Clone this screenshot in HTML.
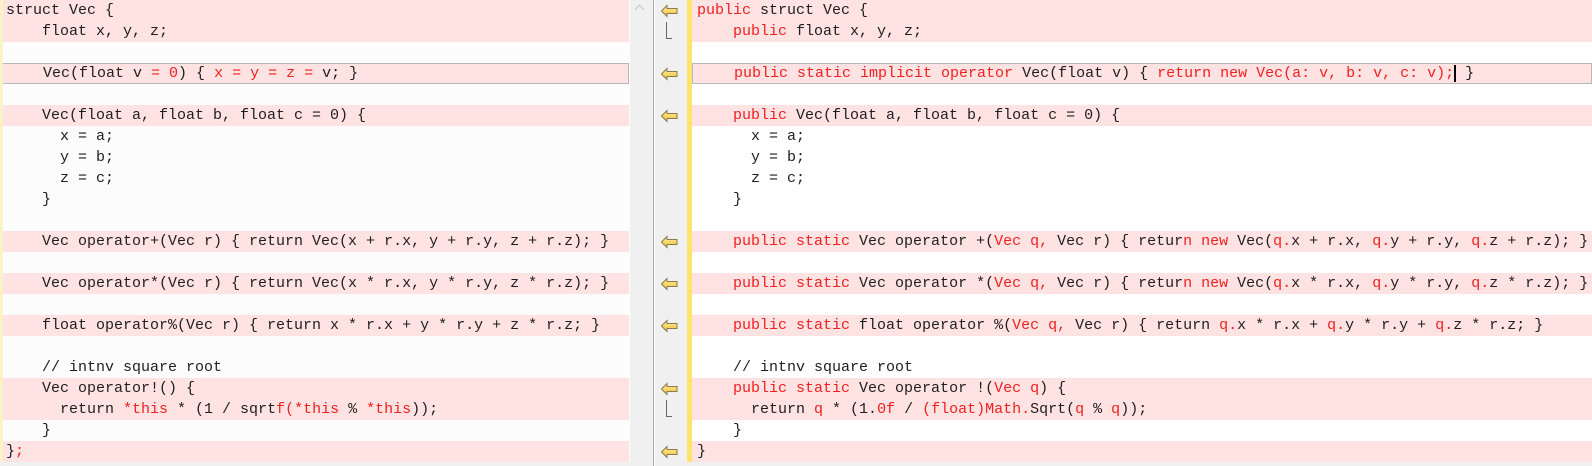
<!DOCTYPE html>
<html><head><meta charset="utf-8"><style>
*{margin:0;padding:0;box-sizing:border-box}
body{width:1592px;height:466px;overflow:hidden;background:#f0f0f0;position:relative;font-family:"Liberation Mono",monospace;font-size:15px;color:#1e1e1e}
.pane{position:absolute;top:0;height:462px;overflow:hidden}
#L{left:0;width:629px;background:#fcfcfc}
#R{left:692px;width:900px;background:#fff}
.ln{position:absolute;left:0;right:0;height:21px;line-height:21px;white-space:pre}
#L .ln{padding-left:6px}
#R .ln{padding-left:5px}
.p{background:#ffe3e3}
.box{border:1px solid #b8b8b8;line-height:19px}
.r{color:#f02020}
.arr{position:absolute;left:661px;width:17px;height:12px}
.brk{position:absolute;left:666px;width:6px;border-left:1px solid #666;border-bottom:1px solid #666}
</style></head><body>
<div style="position:absolute;left:0;top:0;width:3px;height:462px;background:#fbf3c8;z-index:2"></div>
<div class="pane" id="L">
<div class="ln p" style="top:0">struct Vec {</div>
<div class="ln p" style="top:21px">    float x, y, z;</div>
<div class="ln p box" style="top:63px">    Vec(float v <span class="r">= 0</span>) { <span class="r">x = y = z =</span> v; }</div>
<div class="ln p" style="top:105px">    Vec(float a, float b, float c = 0) {</div>
<div class="ln" style="top:126px">      x = a;</div>
<div class="ln" style="top:147px">      y = b;</div>
<div class="ln" style="top:168px">      z = c;</div>
<div class="ln" style="top:189px">    }</div>
<div class="ln p" style="top:231px">    Vec operator+(Vec r) { return Vec(x + r.x, y + r.y, z + r.z); }</div>
<div class="ln p" style="top:273px">    Vec operator*(Vec r) { return Vec(x * r.x, y * r.y, z * r.z); }</div>
<div class="ln p" style="top:315px">    float operator%(Vec r) { return x * r.x + y * r.y + z * r.z; }</div>
<div class="ln" style="top:357px">    // intnv square root</div>
<div class="ln p" style="top:378px">    Vec operator!() {</div>
<div class="ln p" style="top:399px">      return <span class="r">*this</span> * (1 / sqrt<span class="r">f(*this</span> % <span class="r">*this</span>));</div>
<div class="ln" style="top:420px">    }</div>
<div class="ln p" style="top:441px">}<span class="r">;</span></div>
</div>
<div style="position:absolute;left:629px;top:0;width:1px;height:462px;background:#fff"></div>
<div style="position:absolute;left:636px;top:6px;width:7px;height:7px;border-left:1.5px solid #c4c4c4;border-top:1.5px solid #c4c4c4;transform:rotate(45deg)"></div>
<div style="position:absolute;left:653px;top:0;width:2px;height:466px;background:#a8a8a8;border-right:1px solid #fff"></div>
<div style="position:absolute;left:687px;top:0;width:5px;height:462px;background:#ffe36a"></div>
<svg width="1592" height="466" style="position:absolute;left:0;top:0">
<defs><linearGradient id="g" x1="0" y1="0" x2="0" y2="1"><stop offset="0" stop-color="#fff0a0"/><stop offset="1" stop-color="#f0c030"/></linearGradient>
<path id="a" d="M0.5 6 L6 0.5 L6 3.5 L16 3.5 L16 8.5 L6 8.5 L6 11.5 Z" fill="url(#g)" stroke="#8a7a50" stroke-width="1"/></defs>
<use href="#a" x="661" y="5"/>
<use href="#a" x="661" y="68"/>
<use href="#a" x="661" y="110"/>
<use href="#a" x="661" y="236"/>
<use href="#a" x="661" y="278"/>
<use href="#a" x="661" y="320"/>
<use href="#a" x="661" y="383"/>
<use href="#a" x="661" y="446"/>
<path d="M666.5 22 V38.5 H672" stroke="#666" fill="none"/>
<path d="M666.5 400 V416.5 H672" stroke="#666" fill="none"/>
</svg>
<div class="pane" id="R">
<div class="ln p" style="top:0"><span class="r">public</span> struct Vec {</div>
<div class="ln p" style="top:21px">    <span class="r">public</span> float x, y, z;</div>
<div class="ln p box" style="top:63px">    <span class="r">public static implicit operator</span> Vec(float v) { <span class="r">return new Vec(a: v, b: v, c: v);</span><span style="border-left:2px solid #000"></span> }</div>
<div class="ln p" style="top:105px">    <span class="r">public</span> Vec(float a, float b, float c = 0) {</div>
<div class="ln" style="top:126px">      x = a;</div>
<div class="ln" style="top:147px">      y = b;</div>
<div class="ln" style="top:168px">      z = c;</div>
<div class="ln" style="top:189px">    }</div>
<div class="ln p" style="top:231px">    <span class="r">public static</span> Vec operator +(<span class="r">Vec q,</span> Vec r) { retur<span class="r">n new</span> Vec(<span class="r">q.</span>x + r.x, <span class="r">q.</span>y + r.y, <span class="r">q.</span>z + r.z); }</div>
<div class="ln p" style="top:273px">    <span class="r">public static</span> Vec operator *(<span class="r">Vec q,</span> Vec r) { retur<span class="r">n new</span> Vec(<span class="r">q.</span>x * r.x, <span class="r">q.</span>y * r.y, <span class="r">q.</span>z * r.z); }</div>
<div class="ln p" style="top:315px">    <span class="r">public static</span> float operator %(<span class="r">Vec q,</span> Vec r) { return <span class="r">q.</span>x * r.x + <span class="r">q.</span>y * r.y + <span class="r">q.</span>z * r.z; }</div>
<div class="ln" style="top:357px">    // intnv square root</div>
<div class="ln p" style="top:378px">    <span class="r">public static</span> Vec operator !(<span class="r">Vec q</span>) {</div>
<div class="ln p" style="top:399px">      return <span class="r">q</span> * (1.<span class="r">0f</span> / <span class="r">(float)Math.</span>Sqrt(<span class="r">q</span> % <span class="r">q</span>));</div>
<div class="ln" style="top:420px">    }</div>
<div class="ln p" style="top:441px">}</div>
</div>
</body></html>
